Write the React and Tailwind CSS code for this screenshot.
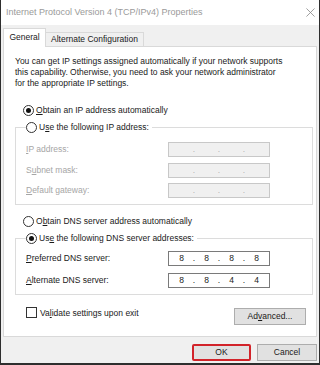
import { Fragment } from "react";

function Radio({ checked }) {
  return (
    <span className="w-[11px] h-[11px] rounded-full border border-[#333333] bg-white flex items-center justify-center shrink-0">
      {checked && <span className="w-[5px] h-[5px] rounded-full bg-[#111111]" />}
    </span>
  );
}

function IpBox({ parts, disabled }) {
  return (
    <div
      className={
        disabled
          ? "w-[102px] h-[15px] border border-[#c8c8c8] bg-[#f0f0f0] flex items-center text-[#b4b4b4]"
          : "w-[102px] h-[15px] border border-[#7a7a7a] bg-white flex items-center text-[#1a1a1a]"
      }
    >
      {[0, 1, 2, 3].map((i) => (
        <Fragment key={i}>
          {i > 0 && <span className="w-0 flex justify-center">.</span>}
          <span className="flex-1 text-center">{parts ? parts[i] : ""}</span>
        </Fragment>
      ))}
    </div>
  );
}

function Row({ pre, u, post, parts, disabled }) {
  return (
    <div className="flex items-center">
      <span className={disabled ? "w-[142px] text-[#a6a6a6]" : "w-[142px]"}>
        {pre}<span className="underline">{u}</span>{post}
      </span>
      <IpBox parts={parts} disabled={disabled} />
    </div>
  );
}

function Btn({ children, className }) {
  return (
    <div className={`h-[17px] border border-[#adadad] bg-[#e1e1e1] flex items-center justify-center ${className}`}>
      {children}
    </div>
  );
}

export default function App() {
  return (
    <div className="w-[320px] h-[365px] bg-[#f0f0f0] border-x border-b-2 border-[#2e2e2e] flex flex-col font-['Liberation_Sans',Arial,sans-serif] text-[8.5px] text-[#1a1a1a] overflow-hidden">
      {/* title bar */}
      <div className="h-[25px] shrink-0 bg-white flex items-center justify-between pl-[5px] pr-[4px]">
        <span className="text-[9px] text-[#9a9a9a]">Internet Protocol Version 4 (TCP/IPv4) Properties</span>
        <svg viewBox="0 0 10 10" className="w-[9px] h-[9px]" stroke="#8a8a8a" strokeWidth="0.9">
          <path d="M0.5 0.5 9.5 9.5M9.5 0.5 0.5 9.5" />
        </svg>
      </div>

      {/* tabs */}
      <div className="flex items-end px-[2px] pt-[3px] h-[21px] shrink-0">
        <div className="relative z-10 -mb-px h-[19px] w-[43px] bg-white border border-b-0 border-[#d9d9d9] flex items-center justify-center pb-[1px]">
          General
        </div>
        <div className="h-[14px] w-[98px] border border-l-0 border-b-0 border-[#d9d9d9] bg-[#f0f0f0] flex items-center justify-center">
          Alternate Configuration
        </div>
      </div>

      {/* panel */}
      <div className="mx-[2px] h-[291px] shrink-0 bg-white border border-[#d9d9d9] pt-[9px] pl-[11px] pr-[3px] flex flex-col">
        <p className="leading-[11px]">
          You can get IP settings assigned automatically if your network supports<br />
          this capability. Otherwise, you need to ask your network administrator<br />
          for the appropriate IP settings.
        </p>

        <div className="mt-[15px] ml-[8px] h-[13px] flex items-center gap-[2px]">
          <Radio checked />
          <span><span className="underline">O</span>btain an IP address automatically</span>
        </div>

        <fieldset className="mt-[4px] border border-[#dcdcdc] px-[6px] pb-[6px]">
          <legend className="h-[13px] ml-[4px] pr-[3px] flex items-center gap-[2px] bg-white">
            <Radio />
            <span>U<span className="underline">s</span>e the following IP address:</span>
          </legend>
          <div className="pl-[4px] pt-[8px] flex flex-col gap-[5.5px]">
            <Row pre="" u="I" post="P address:" disabled />
            <Row pre="S" u="u" post="bnet mask:" disabled />
            <Row pre="" u="D" post="efault gateway:" disabled />
          </div>
        </fieldset>

        <div className="mt-[10px] ml-[8px] h-[13px] flex items-center gap-[2px]">
          <Radio />
          <span>O<span className="underline">b</span>tain DNS server address automatically</span>
        </div>

        <fieldset className="mt-[4px] border border-[#dcdcdc] px-[6px] pb-[6px]">
          <legend className="h-[13px] ml-[4px] pr-[3px] flex items-center gap-[2px] bg-white">
            <Radio checked />
            <span>Us<span className="underline">e</span> the following DNS server addresses:</span>
          </legend>
          <div className="pl-[4px] pt-[6px] flex flex-col gap-[6.5px]">
            <Row pre="" u="P" post="referred DNS server:" parts={["8", "8", "8", "8"]} />
            <Row pre="" u="A" post="lternate DNS server:" parts={["8", "8", "4", "4"]} />
          </div>
        </fieldset>

        <div className="mt-[13px] flex items-start justify-between pl-[11px] pr-[7px]">
          <div className="-mt-px flex items-center gap-[3px]">
            <span className="w-[11px] h-[11px] border border-[#333333] bg-white" />
            <span>Va<span className="underline">l</span>idate settings upon exit</span>
          </div>
          <Btn className="w-[72px]">
            <span>Ad<span className="underline">v</span>anced...</span>
          </Btn>
        </div>
      </div>

      {/* footer */}
      <div className="flex justify-end gap-[6px] pr-[2px] pt-[7px]">
        <div className="w-[59px] h-[17px] rounded-[2px] border-2 border-[#d2232a] bg-[#e1e1e1] flex items-center justify-center">
          OK
        </div>
        <Btn className="w-[60px]">Cancel</Btn>
      </div>
    </div>
  );
}
